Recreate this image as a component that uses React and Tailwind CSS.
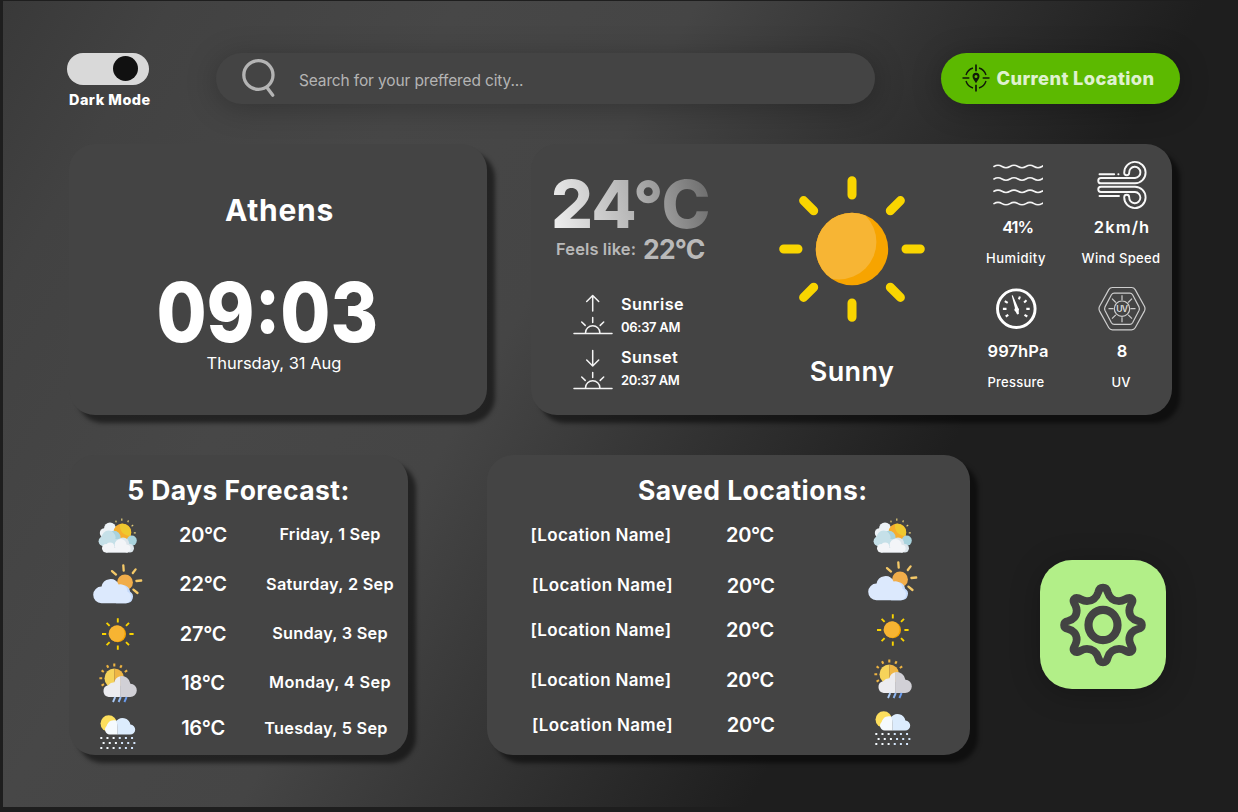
import React from "react";

const CARD = "shrink-0 bg-[#444444] rounded-[26px] shadow-[8px_8px_4px_rgba(0,0,0,0.5)]";

function SearchIcon() {
  return (
    <svg className="w-[34px] h-[39px]" viewBox="0 0 34 39" fill="none" stroke="#b4b4b4" strokeWidth="3.3">
      <ellipse cx="16.4" cy="16" rx="14.6" ry="14.3" />
      <path d="M24.6 28 L30.8 36.2" strokeLinecap="round" />
    </svg>
  );
}

function TargetIcon() {
  return (
    <svg className="w-7 h-7" viewBox="-14 -14 28 28" fill="none" stroke="#101a08">
      <g strokeWidth="1.4">
        <path d="M3 -10 A10.4 10.4 0 0 1 10 -3" />
        <path d="M10 3 A10.4 10.4 0 0 1 3 10" />
        <path d="M-3 10 A10.4 10.4 0 0 1 -10 3" />
        <path d="M-10 -3 A10.4 10.4 0 0 1 -3 -10" />
      </g>
      <path d="M0 -13.5V-6.7M0 6.7V13.5M-13.5 0H-6.7M6.7 0H13.5" strokeWidth="1.7" />
      <path
        fillRule="evenodd"
        d="M0 5.2 C-1.6 2.6 -3.5 .6 -3.5 -1.7 A3.5 3.5 0 0 1 3.5 -1.7 C3.5 .6 1.6 2.6 0 5.2Z M0 -3.1 A1.5 1.5 0 1 0 0 -.1 A1.5 1.5 0 1 0 0 -3.1Z"
        fill="#101a08"
        stroke="none"
      />
    </svg>
  );
}

function HorizonIcon({ down }) {
  return (
    <svg className="w-10 h-[41px]" viewBox="0 0 40 41" fill="none" stroke="#f4f4f4" strokeWidth="1.5" strokeLinecap="round" strokeLinejoin="round">
      <path d={down ? "M19.7 1.5V17M13.7 11L19.7 17L25.7 11" : "M19.7 17V1.5M13.7 7.5L19.7 1.5L25.7 7.5"} />
      <path d="M1 39.4H39M12.4 39.2C12.4 29.4 27 29.4 27 39.2M19.7 23.6V28.4M8.7 28L12.2 31.4M30.7 28L27.2 31.4" />
    </svg>
  );
}

function BigSun() {
  return (
    <svg className="w-[150px] h-[150px]" viewBox="-75 -75 150 150">
      <defs>
        <clipPath id="sun-disc">
          <circle r="36.2" />
        </clipPath>
      </defs>
      <circle r="36.2" fill="#f7a400" />
      <circle cx="-13" cy="-7" r="37.4" fill="#f7b534" clipPath="url(#sun-disc)" />
      <path
        d="M0 -54V-68.3M0 54V68.3M-54 0H-68.3M54 0H68.3M38.3 -38.3L48.4 -48.4M-38.3 -38.3L-48.4 -48.4M38.3 38.3L48.4 48.4M-38.3 38.3L-48.4 48.4"
        stroke="#f9d500"
        strokeWidth="9"
        strokeLinecap="round"
      />
    </svg>
  );
}

function HumidityIcon() {
  const wave = "q4 -2.4 8 0 t8 0 t8 0 t8 0 t8 0 t8 0 t8 0";
  return (
    <svg className="w-[52px] h-[50px]" viewBox="-1 0 52 50" fill="none" stroke="#f4f4f4" strokeWidth="1.6" strokeLinecap="round">
      {[6.5, 19, 31.3, 43.6].map((y) => (
        <path key={y} d={`M2 ${y} ${wave}`} />
      ))}
    </svg>
  );
}

function WindIcon() {
  const tube =
    "M39 23.3A10.7 10.7 0 1 0 28.2 12.7A2.5 2.5 0 0 0 33.2 12.7A5.6 5.6 0 1 1 39 18H4.9A2.65 2.65 0 0 0 4.9 23.3Z";
  return (
    <svg className="w-[52px] h-[50px]" viewBox="-1 0 52 50" fill="none" stroke="#f8f8f8" strokeWidth="1.9" strokeLinecap="round">
      <path d={tube} />
      <path d={tube} transform="translate(0 50) scale(1 -1)" />
      <path d="M3.5 14.2H18.2M22.3 14.2H22.5M3.5 36H23" />
    </svg>
  );
}

function GaugeIcon() {
  return (
    <svg className="w-[50px] h-[50px]" viewBox="-24.3 -24.7 50 50">
      <circle r="18.8" fill="none" stroke="#fff" strokeWidth="2.9" />
      <path d="M-4.6 -13.2L-3.6 -13.4L1.9 -.8C3.2 .2 2.6 1.5 2.4 2L2.6 5.3L.8 5.8L-.6 3C-2 2.2 -2.4 .8 -1.3 -.4Z" fill="#fff" />
      <path d="M-13.4 .2H-9.8M-11.5 -7.6L-8.6 -5.8M-10.6 7.8L-8 6.2M3.6 -12.2L2.6 -9.4M10.2 -8.4L7.8 -6.2M13.4 .2H10M11 7.8L8.2 6.2" stroke="#fff" strokeWidth="2.1" />
    </svg>
  );
}

function UvIcon() {
  return (
    <svg className="w-[50px] h-[50px]" viewBox="-26 -24.7 50 50" fill="none" stroke="#cdcdcd" strokeWidth="1.2" strokeLinejoin="round">
      <path d="M-9.6 -21.2H9.6Q12 -21.2 13.2 -19.1L22.4 -2.4Q23.6 0 22.4 2.4L13.2 19.1Q12 21.2 9.6 21.2H-9.6Q-12 21.2 -13.2 19.1L-22.4 2.4Q-23.6 0 -22.4 -2.4L-13.2 -19.1Q-12 -21.2 -9.6 -21.2Z" />
      <path d="M-7.8 -15.6H7.8Q9.6 -15.6 10.6 -14L17 -1.8Q17.8 0 17 1.8L10.6 14Q9.6 15.6 7.8 15.6H-7.8Q-9.6 15.6 -10.6 14L-17 1.8Q-17.8 0 -17 -1.8L-10.6 -14Q-9.6 -15.6 -7.8 -15.6Z" />
      <circle r="7.7" />
      <path d="M0 -8.5V-13.5M0 8.5V13.5M-8.5 0H-13.5M8.5 0H13.5M6.2 -6.2L10 -10M-6.2 -6.2L-10 -10M6.2 6.2L10 10M-6.2 6.2L-10 10" />
      <text x="-.3" y="3" textAnchor="middle" fontFamily="Inter" fontSize="8.6" fontWeight="600" letterSpacing="-0.8" fill="#dadada" stroke="none">UV</text>
    </svg>
  );
}

function CloudsSun() {
  return (
    <>
      <path d="M23.8 5.6L24.2 7.4M29.8 3.6V5.8M36.4 5.4L35.8 7.2M41.2 10L39.6 11.2M43.8 17.8H41.8" stroke="#e6cf7c" strokeWidth="1.2" />
      <g fill="#edf2f6">
        <circle cx="18" cy="13.4" r="6" />
        <circle cx="12.6" cy="18" r="4.8" />
      </g>
      <circle cx="30.4" cy="17.4" r="8.9" fill="#f6ae2d" />
      <path d="M28 9A8.9 8.9 0 0 1 38.4 21C32 21 27 16 28 9Z" fill="#efc92f" />
      <g fill="#a9d3dd">
        <circle cx="39.8" cy="25.6" r="5" />
        <circle cx="22" cy="22.4" r="6.6" />
      </g>
      <g fill="#c5e0e8">
        <circle cx="16.6" cy="22.6" r="7" />
        <circle cx="11.6" cy="26.2" r="5" />
        <rect x="11" y="24" width="16" height="7" />
      </g>
      <g fill="#dde6ec">
        <circle cx="31" cy="28.6" r="6.2" />
        <circle cx="37.8" cy="33.2" r="4.2" />
        <rect x="12" y="31" width="26" height="6.4" rx="3" />
      </g>
      <g fill="#f3f5f8">
        <circle cx="14.2" cy="33.2" r="4.2" />
        <circle cx="18.2" cy="31.4" r="4" />
        <circle cx="28.6" cy="30" r="6" />
        <circle cx="34.8" cy="33.6" r="3.8" />
        <rect x="14" y="33" width="22" height="4.4" />
      </g>
    </>
  );
}

function CloudSun() {
  return (
    <>
      <path d="M31.3 1.4L31.7 6.6M43.6 5.4L40.8 9M49.2 16.5L44.4 17M41.4 25.6L45.5 29M20 7.1L24 10.6" stroke="#f5c968" strokeWidth="2.3" strokeLinecap="round" />
      <circle cx="33" cy="18.4" r="7.9" fill="#f1ad4a" />
      <path d="M24 39.2H34.5A6.4 6.4 0 0 0 38 27.4A6.6 6.6 0 0 0 28.5 22Z" fill="#c6dbfb" />
      <path d="M9.4 39.2A8.3 8.3 0 0 1 9.6 22.6A8.9 8.9 0 0 1 26.6 20.6A7 7 0 0 1 35.4 27.8A6 6 0 0 1 34 39.2Z" fill="#dce9fd" />
    </>
  );
}

function Sun() {
  return (
    <g transform="translate(25.8 20)">
      <path d="M0 -11.6V-15.8M0 11.6V15.8M-11.6 0H-15.8M11.6 0H15.8M8.2 -8.2L11.2 -11.2M-8.2 -8.2L-11.2 -11.2M8.2 8.2L11.2 11.2M-8.2 8.2L-11.2 11.2" stroke="#f9d300" strokeWidth="1.9" />
      <circle r="8.2" fill="#f7a400" />
      <path d="M3.2 -7.5A8.2 8.2 0 1 0 -3.4 7.4A8.3 8.3 0 0 0 3.2 -7.5Z" fill="#f7b432" />
    </g>
  );
}

function SunRain() {
  return (
    <>
      <path d="M22.3 .4V3.4M15 2.2L16.3 4.8M29.6 2.2L28.3 4.8M9.6 7.4L11.8 9M35.2 7.4L32.8 9M7.4 15.3H10.2M9.6 22.6L12 21.2" stroke="#edb341" strokeWidth="2.1" />
      <path d="M22.3 5.5A9.8 9.8 0 0 0 22.3 25.1Z" fill="#f6d35a" />
      <path d="M22.3 5.5A9.8 9.8 0 0 1 22.3 25.1Z" fill="#efb645" />
      <path d="M28.2 34H16.6A6 6 0 0 1 16.2 22.2A8 8 0 0 1 22.3 19.2A8.4 8.4 0 0 1 28.2 13.3Z" fill="#ececf0" />
      <path d="M28.1 34H38A6.6 6.6 0 0 0 38.4 20.8A8.6 8.6 0 0 0 28.1 13.3Z" fill="#d1d0d6" />
      <g strokeWidth="1.9">
        <path d="M23.2 34L21 39" stroke="#acccf8" />
        <path d="M28.8 34L26.6 39" stroke="#8fb8f4" />
        <path d="M34.6 34L32.4 39" stroke="#6b9df0" />
      </g>
    </>
  );
}

function SunSnow() {
  const dots = [0, 1, 2, 3, 4, 5];
  return (
    <>
      <circle cx="16.7" cy="11.5" r="8.2" fill="#fddf5d" />
      <path d="M25.7 22.6H17.6A5 5 0 0 1 14.6 14A7.4 7.4 0 0 1 25.7 9.4Z" fill="#f5fafe" />
      <path d="M25.6 22.6H38A5 5 0 0 0 38.4 12.6A7.9 7.9 0 0 0 24 9.6Q25.6 12 25.6 14Z" fill="#dcecfd" />
      {dots.map((i) => (
        <g key={i} fill={i < 3 ? "#f5fafe" : "#d3e5fb"}>
          <rect x={8.3 + i * 6.15} y="25" width="2" height="2" />
          <rect x={10.6 + i * 6.15} y="30" width="2" height="2" />
          <rect x={8.3 + i * 6.15} y="35" width="2" height="2" />
        </g>
      ))}
    </>
  );
}

const WEATHER = { cloudsSun: CloudsSun, cloudSun: CloudSun, sun: Sun, sunRain: SunRain, sunSnow: SunSnow };

function WeatherIcon({ kind, className = "" }) {
  const Drawing = WEATHER[kind];
  return (
    <svg className={`w-[52px] h-10 shrink-0 ${className}`} viewBox="0 0 52 40" fill="none">
      <Drawing />
    </svg>
  );
}

function GearIcon() {
  const quarter =
    "M0 -37.3C2.8 -37.3 4 -35.6 4.6 -33C6.4 -27 11 -23.9 16 -23.9C20 -23.9 22 -25.8 24.6 -26.8C28.2 -28 30.4 -25.4 29 -22.4C27.6 -19.4 26.3 -18 26.3 -14.6C26.3 -9 30 -5.2 35 -4C38 -3.4 38.9 -1.8 38.9 0";
  return (
    <svg className="w-[90px] h-[86px]" viewBox="-45 -43 90 86" fill="none" stroke="#434343" strokeWidth="7.8">
      <path d={quarter} />
      <path d={quarter} transform="scale(-1 1)" />
      <path d={quarter} transform="scale(1 -1)" />
      <path d={quarter} transform="scale(-1 -1)" />
      <ellipse rx="14.5" ry="15.2" strokeWidth="8.2" />
    </svg>
  );
}

const FORECAST = [
  { kind: "cloudsSun", temp: "20°C", day: "Friday, 1 Sep", row: "h-[49px]", dayCls: "tracking-[0.2px]", icon: "" },
  { kind: "cloudSun", temp: "22°C", day: "Saturday, 2 Sep", row: "h-[50px]", dayCls: "tracking-[0.3px]", icon: "" },
  { kind: "sun", temp: "27°C", day: "Sunday, 3 Sep", row: "h-[49px]", dayCls: "tracking-[0.24px]", icon: "" },
  { kind: "sunRain", temp: "18°C", day: "Monday, 4 Sep", row: "h-[49px]", dayCls: "tracking-[0.35px]", icon: "" },
  { kind: "sunSnow", temp: "16°C", day: "Tuesday, 5 Sep", row: "h-[42px]", dayCls: "tracking-[0.26px] pr-2", icon: "mt-2" },
];

const SAVED = [
  { kind: "cloudsSun", row: "h-[50px]", icon: "", shift: "" },
  { kind: "cloudSun", row: "h-[51px]", icon: "-mt-[10px]", shift: "pl-[1.5px]" },
  { kind: "sun", row: "h-[38px]", icon: "-mt-px", shift: "" },
  { kind: "sunRain", row: "h-[62px]", icon: "-mt-[2px]", shift: "" },
  { kind: "sunSnow", row: "h-[28px]", icon: "mt-[6px]", shift: "pl-[1.5px]" },
];

function Metric({ icon, value, label, valueCls, labelCls }) {
  return (
    <div className="flex flex-col items-center">
      {icon}
      <div className={`flex h-[34px] items-center text-[16.5px] font-semibold ${valueCls}`}>{value}</div>
      <div className={`flex h-[29px] items-center text-[13px] font-medium ${labelCls}`}>{label}</div>
    </div>
  );
}

export default function App() {
  return (
    <div className="h-[812px] w-[1238px] overflow-hidden bg-[#1e1e1e] pl-[3px] pt-px pb-[5px] font-[Inter,sans-serif] leading-none whitespace-nowrap text-white">
      <div className="h-[806px] overflow-hidden bg-[linear-gradient(119.7deg,#393939_0%,#424242_10%,#474747_27%,#454545_41%,#1e1e1e_71%)] pt-[52px]">
        <header className="flex h-[91px] items-start pl-16">
          <div className="w-[149px] shrink-0">
            <div className="flex h-[31.5px] w-[82px] items-center justify-end rounded-full bg-[#d9d9d9] pr-[11px]">
              <div className="size-[25px] rounded-full bg-[#111111]" />
            </div>
            <div className="flex h-[31px] items-center pl-[2px] text-[14.4px] font-extrabold tracking-[0.5px]">Dark Mode</div>
          </div>
          <div className="flex h-[50.5px] w-[658.5px] shrink-0 items-center rounded-full bg-[#444444] pl-[26px] shadow-[0_4px_30px_rgba(0,0,0,0.25)]">
            <SearchIcon />
            <span className="pt-[4px] pl-[23px] text-[15.5px] tracking-[-0.14px] text-[#b4b4b4]">Search for your preffered city...</span>
          </div>
          <button className="ml-[66.5px] flex h-[50.5px] w-[239px] shrink-0 items-center rounded-full bg-[#5cb900] pl-[20.5px] shadow-[0_4px_30px_rgba(0,0,0,0.25)]">
            <TargetIcon />
            <span className="pl-[7px] text-[18.3px] font-extrabold tracking-[0.36px] text-[#dff1cf]">Current Location</span>
          </button>
        </header>

        <div className="flex gap-11 pl-[66px]">
          <section className={`${CARD} flex h-[270.5px] w-[418px] flex-col items-center pt-[46px]`}>
            <h1 className="flex h-10 items-center pl-[3px] text-[30px] font-bold tracking-[0.7px]">Athens</h1>
            <div className="mt-[42px] mr-[22px] flex h-[82px] scale-x-[0.885] items-center text-[82px] font-extrabold">09:03</div>
            <div className="flex h-[18px] items-center pr-2 text-[16.5px]">Thursday, 31 Aug</div>
          </section>

          <section className={`${CARD} flex h-[270.5px] w-[641px]`}>
            <div className="w-[231px] shrink-0 pt-[27px]">
              <div className="ml-[20px] flex h-[66px] w-[164px] items-center bg-[linear-gradient(75deg,#f2f2f2_0%,#b4b4b4_50%,#6a6a6a_96%)] bg-clip-text text-[66px] font-extrabold tracking-[-0.8px] text-transparent">24°C</div>
              <div className="flex h-6 items-center pl-[25px] text-[#b9b9b9]">
                <span className="w-[87px] text-[16.5px] font-semibold tracking-[0.1px]">Feels like:</span>
                <span className="text-[26.5px] font-bold tracking-[-0.8px]">22°C</span>
              </div>
              <div className="mt-[33px] flex gap-2 pl-[42px]">
                <div className="flex flex-col gap-[14.4px]">
                  <HorizonIcon />
                  <HorizonIcon down />
                </div>
                <div className="font-semibold">
                  <div className="flex h-5 items-center text-[16.3px] tracking-[0.45px]">Sunrise</div>
                  <div className="flex h-[26px] items-center text-[13px] tracking-[-0.3px]">06:37 AM</div>
                  <div className="mt-[7.5px] flex h-5 items-center text-[16.3px] tracking-[0.4px]">Sunset</div>
                  <div className="flex h-[26px] items-center text-[13px] tracking-[-0.35px]">20:37 AM</div>
                </div>
              </div>
            </div>
            <div className="flex w-[180px] shrink-0 flex-col items-center pt-[29.5px]">
              <BigSun />
              <div className="mt-[27.5px] flex h-10 items-center text-[27px] font-semibold tracking-[0.4px]">Sunny</div>
            </div>
            <div className="ml-[23px] grid grid-cols-[104px_104px] content-start gap-y-[11px] pt-4">
              <Metric icon={<HumidityIcon />} value="41%" label="Humidity" valueCls="tracking-[-1.1px] pl-px" labelCls="tracking-[0.5px] pr-[2px]" />
              <Metric icon={<WindIcon />} value="2km/h" label="Wind Speed" valueCls="tracking-[1.1px] pl-[2px]" labelCls="tracking-[0.35px]" />
              <Metric icon={<GaugeIcon />} value="997hPa" label="Pressure" valueCls="tracking-[0.1px] pl-[2px]" labelCls="tracking-[0.25px] pr-[2px]" />
              <Metric icon={<UvIcon />} value="8" label="UV" valueCls="pl-[2px]" labelCls="" />
            </div>
          </section>
        </div>

        <div className="mt-[40.5px] flex pl-[66px]">
          <section className={`${CARD} h-[300px] w-[339px]`}>
            <h2 className="flex h-[55px] items-center justify-center pt-[15px] text-[26.5px] font-bold tracking-[0.4px]">5 Days Forecast:</h2>
            {FORECAST.map((f) => (
              <div key={f.day} className={`flex items-center pl-[23px] ${f.row}`}>
                <WeatherIcon kind={f.kind} className={f.icon} />
                <span className="w-[118px] text-center text-[20px] font-semibold tracking-[-0.3px]">{f.temp}</span>
                <span className={`w-[136px] text-center text-[16.3px] font-semibold ${f.dayCls}`}>{f.day}</span>
              </div>
            ))}
          </section>

          <section className={`${CARD} ml-[79px] h-[300px] w-[482.5px]`}>
            <h2 className="flex h-[55px] items-center justify-center pt-[15px] pl-[49px] text-[26.5px] font-bold tracking-[0.45px]">Saved Locations:</h2>
            {SAVED.map((s) => (
              <div key={s.kind} className={`flex items-center pl-[43.5px] ${s.row}`}>
                <span className={`w-[140.5px] text-[17px] font-semibold tracking-[0.32px] ${s.shift}`}>[Location Name]</span>
                <span className={`w-[158px] text-center text-[20px] font-semibold tracking-[-0.3px] ${s.shift}`}>20°C</span>
                <WeatherIcon kind={s.kind} className={`ml-[38px] ${s.icon}`} />
              </div>
            ))}
          </section>

          <button className="mt-[105px] ml-[70.5px] flex h-[129px] w-[125.5px] items-center justify-center rounded-[32px] bg-[#b2ef88] shadow-[0_4px_30px_rgba(0,0,0,0.25)]">
            <GearIcon />
          </button>
        </div>
      </div>
    </div>
  );
}
